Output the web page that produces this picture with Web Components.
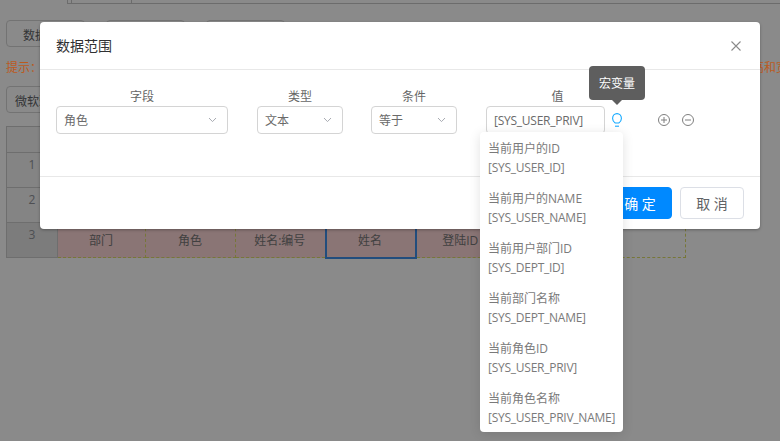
<!DOCTYPE html>
<html>
<head>
<meta charset="utf-8">
<title>数据范围</title>
<style>
  html, body { margin: 0; height: 100%; }
  body { width: 780px; height: 441px; overflow: hidden; position: relative; background: #fff;
    font-family: "Open Sans", "Noto Sans CJK SC", sans-serif; font-size: 12px; color: #606266; }
</style>
</head>
<body>
<sheet-page></sheet-page>
<modal-mask></modal-mask>
<range-dialog title-text="数据范围"></range-dialog>

<script>
class SheetPage extends HTMLElement {
  constructor() {
    super();
    this.attachShadow({ mode: 'open' });
    this.shadowRoot.innerHTML = `
      <style>
        :host { display: flex; flex-direction: column; width: 780px; height: 441px; box-sizing: border-box; overflow: hidden; }
        #tabs { display: flex; height: 4px; border-bottom: 1px solid #c8c8c8; box-sizing: border-box; margin-left: 67px; }
        #tabs i { display: block; box-sizing: border-box; border-right: 1px solid #c8c8c8; border-left: 1px solid #c8c8c8; }
        #tabs i:nth-child(1) { width: 4px; border-right: 0; }
        #tabs i:nth-child(2) { width: 61px; }
        #buttons { display: flex; gap: 21px; margin: 16px 0 0 6px; }
        #buttons span { width: 79px; height: 27px; box-sizing: border-box; border: 1px solid #d5d5d5; border-radius: 4px; padding: 5px 0 0 16px; }
        /* the orange hint stays brighter than the mask would allow */
        #hint { display: flex; justify-content: space-between; color: #bb5a1e; margin: 13px -8px 0 6px; height: 16px; line-height: 16px;
          position: relative; z-index: 1; }
        #hint b { font-weight: 400; white-space: nowrap; }
        #font { width: 90px; height: 27px; box-sizing: border-box; border: 1px solid #d5d5d5; border-radius: 4px; margin: 10px 0 0 6px; padding: 5px 0 0 8px; }
        table { border-collapse: collapse; table-layout: fixed; margin: 13px 0 0 6px; width: 679px; color: #909399; }
        td { padding: 0; text-align: center; box-sizing: border-box; border: 1px dashed #dcdc68; }
        tr { height: 35px; }
        tr.head { height: 26px; }
        td.n { background: #f4f4f4; border: 1px solid #ccc; vertical-align: top; padding-top: 3px; }
        tr.data td.n { background: #e6e6e6; }
        tr.data td:not(.n) { background: #ffd8d8; color: #777; padding-right: 1px; }
        tr.data td.sel { border: 2px solid #3f8fe8; }
      </style>
      <div id="tabs"><i></i><i></i></div>
      <div id="buttons"><span>数据</span><span></span><span></span></div>
      <div id="hint"><span>提示：</span><b>高和宽</b></div>
      <div id="font">微软雅黑</div>
      <table>
        <colgroup><col style="width:51px"><col style="width:88px"><col style="width:90px"><col style="width:90px"><col style="width:90px"><col style="width:90px"><col style="width:90px"><col style="width:90px"></colgroup>
        <tr class="head"><td class="n"></td><td></td><td></td><td></td><td></td><td></td><td></td><td></td></tr>
        <tr><td class="n">1</td><td></td><td></td><td></td><td></td><td></td><td></td><td></td></tr>
        <tr><td class="n">2</td><td></td><td></td><td></td><td></td><td></td><td></td><td></td></tr>
        <tr class="data"><td class="n">3</td><td>部门</td><td>角色</td><td>姓名:编号</td><td class="sel">姓名</td><td>登陆ID</td><td style="background:none"></td><td style="background:none"></td></tr>
      </table>
    `;
  }
}
customElements.define('sheet-page', SheetPage);

class ModalMask extends HTMLElement {
  constructor() {
    super();
    this.attachShadow({ mode: 'open' });
    this.shadowRoot.innerHTML = `
      <style>
        :host { display: block; position: absolute; inset: 0; background: rgba(0,0,0,.46); }
      </style>
    `;
  }
}
customElements.define('modal-mask', ModalMask);

class FieldSelect extends HTMLElement {
  constructor() {
    super();
    this.attachShadow({ mode: 'open' });
    this.shadowRoot.innerHTML = `
      <style>
        :host { display: flex; flex-direction: column; align-items: stretch; }
        label { text-align: center; height: 18px; line-height: 18px; margin: 2px 0 0; color: #666; }
        :host([plain]) label { margin-right: -24px; }
        :host([plain]) #val { letter-spacing: -.25px; }
        #box { display: flex; align-items: center; justify-content: space-between; height: 28px; box-sizing: border-box;
          border: 1px solid #d4d4d4; border-radius: 4px; padding: 0 10px 0 7px; color: #6a6a6a; white-space: nowrap; }
        svg { width: 9px; height: 6px; margin-top: -1px; }
      </style>
      <label></label>
      <div id="box"><span id="val"></span>
        <svg viewBox="0 0 9 6"><path d="M1 1l3.5 3.6L8 1" fill="none" stroke="#a8abb2" stroke-width="1"/></svg>
      </div>
    `;
  }
  connectedCallback() {
    this.shadowRoot.querySelector('label').textContent = this.getAttribute('label');
    this.shadowRoot.querySelector('#val').textContent = this.getAttribute('value');
    if (this.hasAttribute('plain')) this.shadowRoot.querySelector('svg').remove();
  }
}
customElements.define('field-select', FieldSelect);

class MacroMenu extends HTMLElement {
  constructor() {
    super();
    this.attachShadow({ mode: 'open' });
    this.shadowRoot.innerHTML = `
      <style>
        :host { display: block; position: absolute; left: 440px; top: 110px; width: 143px; height: 300px; box-sizing: border-box;
          background: #fff; border-radius: 4px; box-shadow: 0 2px 12px rgba(0,0,0,.12); padding: 7px 0 0 8px; color: #7a7a7a; }
        div { height: 50px; line-height: 19px; white-space: nowrap; }
        div span { display: block; }
        div span + span { letter-spacing: -.25px; }
      </style>
      <div><span>当前用户的ID</span><span>[SYS_USER_ID]</span></div>
      <div><span>当前用户的NAME</span><span>[SYS_USER_NAME]</span></div>
      <div><span>当前用户部门ID</span><span>[SYS_DEPT_ID]</span></div>
      <div><span>当前部门名称</span><span>[SYS_DEPT_NAME]</span></div>
      <div><span>当前角色ID</span><span>[SYS_USER_PRIV]</span></div>
      <div><span>当前角色名称</span><span>[SYS_USER_PRIV_NAME]</span></div>
    `;
  }
}
customElements.define('macro-menu', MacroMenu);

class TipBubble extends HTMLElement {
  constructor() {
    super();
    this.attachShadow({ mode: 'open' });
    this.shadowRoot.innerHTML = `
      <style>
        :host { display: block; position: absolute; left: 549px; top: 44px; width: 56px; height: 34px; box-sizing: border-box;
          background: #5e5e5e; border-radius: 4px; color: #fff; text-align: center; line-height: 35px; }
        :host::after { content: ""; position: absolute; left: 23px; top: 34px; border: 5px solid transparent; border-top-color: #5e5e5e; border-bottom: 0; }
      </style>
      <slot></slot>
    `;
  }
}
customElements.define('tip-bubble', TipBubble);

class RangeDialog extends HTMLElement {
  constructor() {
    super();
    this.attachShadow({ mode: 'open' });
    this.shadowRoot.innerHTML = `
      <style>
        :host { display: block; position: absolute; z-index: 2; left: 40px; top: 22px; width: 720px; height: 207px; background: #fff;
          border-radius: 4px; box-shadow: 0 1px 3px rgba(0,0,0,.3); }
        header { display: flex; align-items: center; justify-content: space-between; height: 48px; box-sizing: border-box;
          border-bottom: 1px solid #e8e8e8; padding: 0 19px 0 16px; font-size: 14px; color: #303133; }
        header span { margin-bottom: 2px; }
        header svg { width: 10px; height: 10px; }
        #row { display: flex; align-items: flex-start; height: 107px; box-sizing: border-box; padding: 16px 0 0 16px; border-bottom: 1px solid #e8e8e8; }
        field-select:nth-child(1) { width: 172px; margin-right: 29px; }
        field-select:nth-child(2) { width: 86px; margin-right: 28px; }
        field-select:nth-child(3) { width: 86px; margin-right: 29px; }
        field-select:nth-child(4) { width: 119px; }
        #icons { display: flex; align-items: center; height: 28px; margin-top: 20px; }
        #icons svg { display: block; }
        #bulb { margin-left: 7px; margin-right: 36px; }
        #plus { margin-right: 12px; }
        footer { display: flex; justify-content: flex-end; gap: 8px; padding: 10px 16px 0 0; }
        button { width: 64px; height: 32px; border-radius: 4px; font: inherit; font-size: 14px; padding: 0; border: 1px solid #dcdfe6; background: #fff; color: #606266; }
        button.ok { background: #0089ff; border-color: #0089ff; color: #fff; }
      </style>
      <header><span id="title"></span>
        <svg viewBox="0 0 10 10"><path d="M.5.5l9 9M9.5.5l-9 9" stroke="#8a8a8a" stroke-width="1.1" fill="none"/></svg>
      </header>
      <div id="row">
        <field-select label="字段" value="角色"></field-select>
        <field-select label="类型" value="文本"></field-select>
        <field-select label="条件" value="等于"></field-select>
        <field-select label="值" value="[SYS_USER_PRIV]" plain></field-select>
        <div id="icons">
          <svg id="bulb" width="10" height="14" viewBox="0 0 10 14" fill="none" stroke="#14a9ff" stroke-width="1.1">
            <path d="M3.2 10C1.8 9 .6 7.6 .6 5.4.6 2.6 2.6.6 5 .6s4.4 2 4.4 4.8c0 2.2-1.2 3.6-2.6 4.6z"/>
            <path d="M3 13.2h4"/>
          </svg>
          <svg id="plus" width="12" height="12" viewBox="0 0 12 12" fill="none" stroke="#7f7f7f" stroke-width="1">
            <circle cx="6" cy="6" r="5.5"/><path d="M3 6h6M6 3v6"/>
          </svg>
          <svg width="12" height="12" viewBox="0 0 12 12" fill="none" stroke="#7f7f7f" stroke-width="1">
            <circle cx="6" cy="6" r="5.5"/><path d="M3 6h6"/>
          </svg>
        </div>
      </div>
      <footer><button class="ok">确 定</button><button>取 消</button></footer>
      <tip-bubble>宏变量</tip-bubble>
      <macro-menu></macro-menu>
    `;
  }
  connectedCallback() {
    this.shadowRoot.querySelector('#title').textContent = this.getAttribute('title-text');
  }
}
customElements.define('range-dialog', RangeDialog);
</script>
</body>
</html>
